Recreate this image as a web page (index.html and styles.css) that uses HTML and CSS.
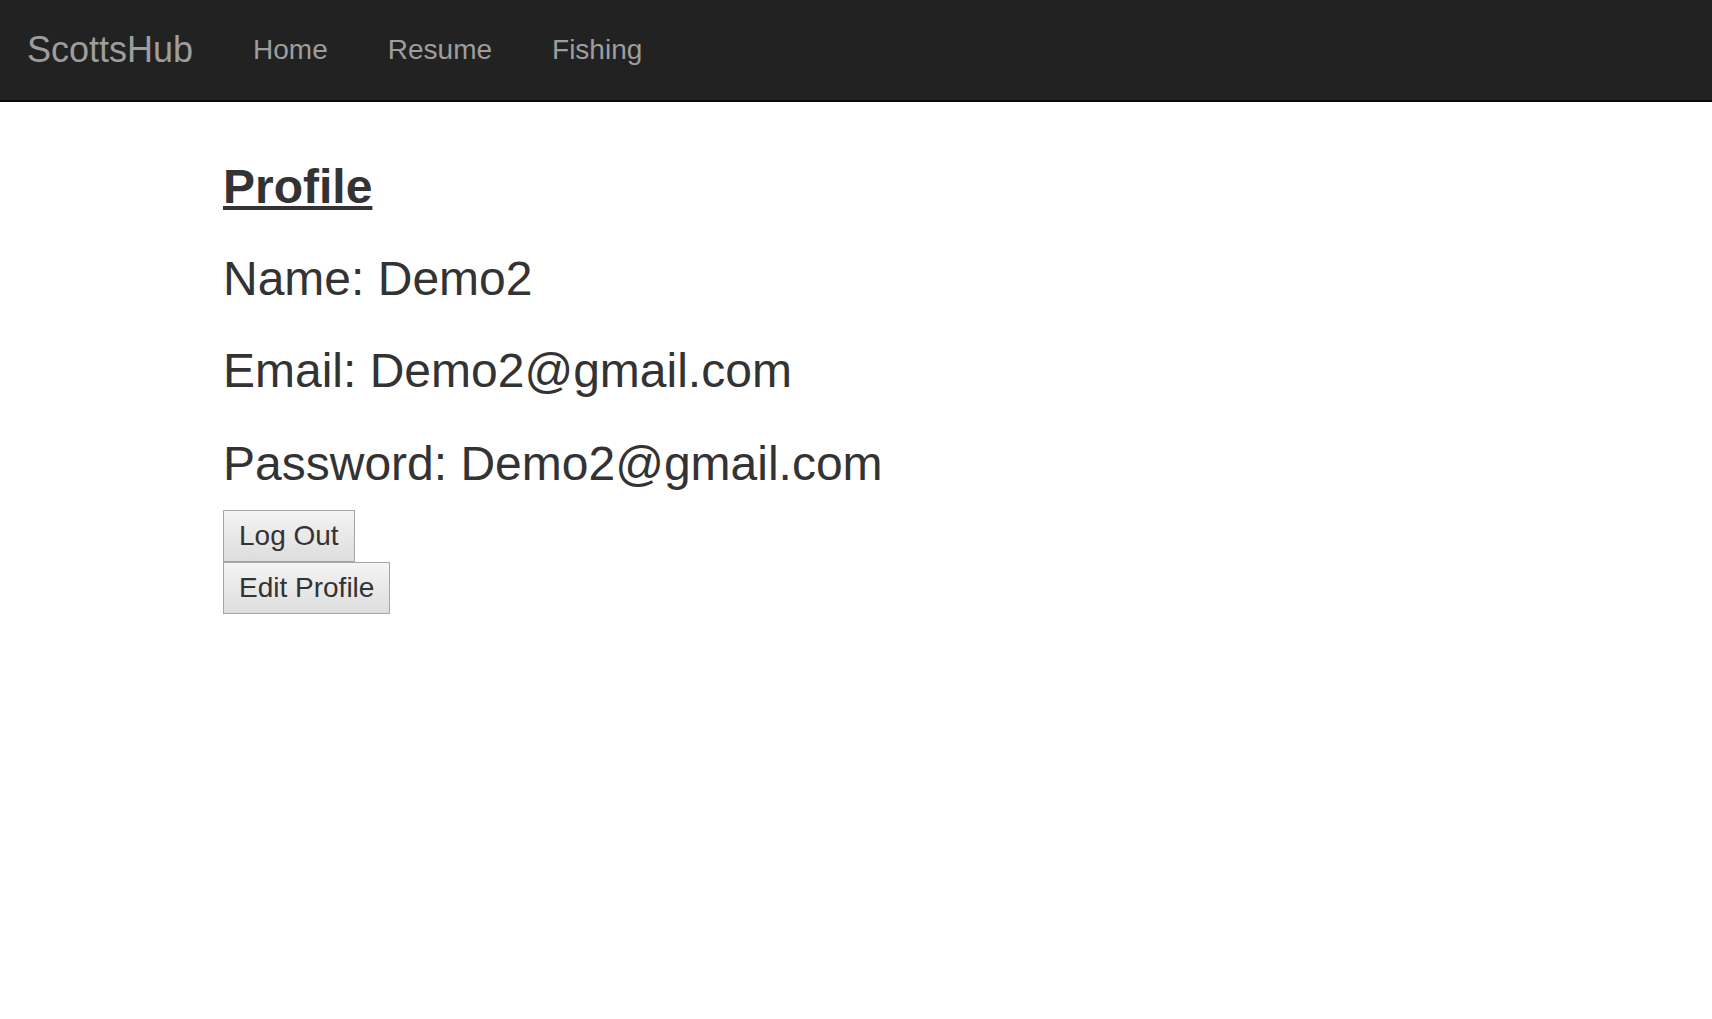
FILE: index.html
```html
<!DOCTYPE html>
<html lang="en">
<head>
<meta charset="utf-8">
<title>Profile - ScottsHub</title>
<link rel="stylesheet" href="styles.css">
</head>
<body>
<nav class="navbar">
  <a class="brand" href="#">ScottsHub</a>
  <ul class="nav-links">
    <li><a href="#">Home</a></li>
    <li><a href="#">Resume</a></li>
    <li><a href="#">Fishing</a></li>
  </ul>
</nav>
<main class="content">
  <h3 class="title">Profile</h3>
  <h3 class="field">Name: Demo2</h3>
  <h3 class="field">Email: Demo2@gmail.com</h3>
  <h3 class="field">Password: Demo2@gmail.com</h3>
  <div class="actions">
    <button class="btn" type="button">Log Out</button>
    <button class="btn" type="button">Edit Profile</button>
  </div>
</main>
</body>
</html>
```
FILE: styles.css
```css
html, body {
  margin: 0;
  padding: 0;
  background: #fff;
}
body {
  font-family: "Liberation Sans", Arial, Helvetica, sans-serif;
  color: #333;
  font-size: 28px;
}
.navbar {
  display: flex;
  align-items: flex-start;
  height: 100px;
  background: #222222;
  border-bottom: 2px solid #080808;
  box-sizing: content-box;
  padding-left: 27px;
}
.brand {
  display: block;
  padding: 30px 30px 0 0;
  font-size: 36px;
  line-height: 40px;
  color: #9d9d9d;
  text-decoration: none;
}
.nav-links {
  display: flex;
  list-style: none;
  margin: 0;
  padding: 0;
}
.nav-links a {
  display: block;
  padding: 30px 30px 0;
  font-size: 28px;
  line-height: 40px;
  color: #9d9d9d;
  text-decoration: none;
}
.content {
  padding: 19px 0 0 223px;
}
.content h3 {
  margin: 40px 0 20px;
  font-size: 48px;
  line-height: 52.2px;
  font-weight: 400;
}
.content h3.title {
  font-weight: 700;
  text-decoration: underline;
}
.actions {
  display: flex;
  flex-direction: column;
  align-items: flex-start;
}
.btn {
  font-family: inherit;
  font-size: 28px;
  line-height: 40px;
  color: #333;
  margin: 0;
  padding: 5px 15px;
  border: 1px solid #a6a6a6;
  border-radius: 0;
  background: linear-gradient(#f4f4f4, #dddddd);
}
```
